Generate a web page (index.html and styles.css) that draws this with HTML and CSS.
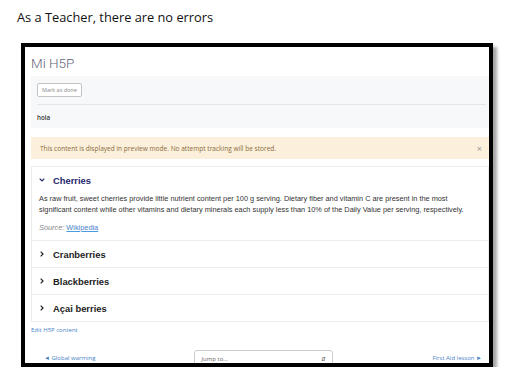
FILE: index.html
```html
<!DOCTYPE html>
<html lang="en">
<head>
    <meta charset="UTF-8">
    <meta name="viewport" content="width=device-width, initial-scale=1.0">
    <title>Mi H5P</title>
    <link rel="stylesheet" href="styles.css">
</head>
<body>

    <p class="caption">As a Teacher, there are no errors</p>

    <div class="frame">
        <div class="page">
            <h1 class="page-title">Mi H5P</h1>

            <div class="activity-header">
                <button class="btn-done">Mark as done</button>
                <div class="activity-desc">hola</div>
            </div>

            <div class="alert">
                <span>This content is displayed in preview mode. No attempt tracking will be stored.</span>
                <span class="alert-close">&times;</span>
            </div>

            <div class="h5p-box">
                <div class="acc-item open">
                    <div class="acc-head">
                        <svg class="chev" width="6" height="4" viewBox="0 0 6 4"><path d="M0.7 0.7 L3 3 L5.3 0.7" fill="none" stroke="currentColor" stroke-width="1.2"/></svg>
                        <span class="acc-title">Cherries</span>
                    </div>
                    <div class="acc-body">
                        <p>As raw fruit, sweet cherries provide little nutrient content per 100 g serving. Dietary fiber and vitamin C are present in the most significant content while other vitamins and dietary minerals each supply less than 10% of the Daily Value per serving, respectively.</p>
                        <p class="source"><em>Source:</em> <a href="#">Wikipedia</a></p>
                    </div>
                </div>
                <div class="acc-item">
                    <div class="acc-head">
                        <svg class="chev" width="6" height="6" viewBox="0 0 6 6"><path d="M1.7 0.7 L4 3 L1.7 5.3" fill="none" stroke="currentColor" stroke-width="1.2"/></svg>
                        <span class="acc-title">Cranberries</span>
                    </div>
                </div>
                <div class="acc-item">
                    <div class="acc-head">
                        <svg class="chev" width="6" height="6" viewBox="0 0 6 6"><path d="M1.7 0.7 L4 3 L1.7 5.3" fill="none" stroke="currentColor" stroke-width="1.2"/></svg>
                        <span class="acc-title">Blackberries</span>
                    </div>
                </div>
                <div class="acc-item">
                    <div class="acc-head">
                        <svg class="chev" width="6" height="6" viewBox="0 0 6 6"><path d="M1.7 0.7 L4 3 L1.7 5.3" fill="none" stroke="currentColor" stroke-width="1.2"/></svg>
                        <span class="acc-title">Açai berries</span>
                    </div>
                </div>
            </div>

            <a class="edit-link" href="#">Edit H5P content</a>

            <div class="activity-nav">
                <a href="#">&#9668; Global warming</a>
                <div class="jump">
                    <span>Jump to...</span>
                    <span class="jump-arrows">&#8693;</span>
                </div>
                <a href="#">First Aid lesson &#9658;</a>
            </div>
        </div>
    </div>

</body>
</html>
```

FILE: styles.css
```css
body {
    margin: 0;
    background-color: #fff;
    font-family: "Open Sans", "Liberation Sans", sans-serif;
}

.caption {
    margin: 0;
    padding: 9px 0 0 17px;
    font-size: 12.8px;
    line-height: 16px;
    color: #111;
}

.frame {
    margin: 18px 0 0 21px;
    width: 464px;
    height: 316px;
    border: 4px solid #000;
    box-shadow: 4px 4px 3px rgba(0, 0, 0, 0.35);
    overflow: hidden;
    background-color: #fff;
}

.page {
    padding-left: 6px;
}

.page-title {
    margin: 8px 0 5px;
    font-family: Roboto, "Open Sans", sans-serif;
    font-weight: 300;
    font-size: 13.5px;
    line-height: 16px;
    color: #67657a;
}

/* activity header */
.activity-header {
    background-color: #f7f8fa;
    padding: 7px 3px 5px 6px;
}

.btn-done {
    display: block;
    height: 14px;
    padding: 0 4px;
    margin-bottom: 7px;
    border: 1px solid #c4c4c4;
    border-radius: 2px;
    background-color: #fff;
    font-family: "Open Sans", sans-serif;
    font-size: 5.5px;
    color: #888;
}

.activity-desc {
    border-top: 1px solid #e4e5e8;
    padding-top: 8px;
    font-size: 6.3px;
    line-height: 10px;
    font-weight: 600;
    color: #333;
}

/* preview alert */
.alert {
    margin-top: 9px;
    height: 22px;
    padding: 0 7px 0 9px;
    background-color: #fcefdc;
    display: flex;
    justify-content: space-between;
    align-items: center;
    font-size: 6.55px;
    color: #8a6d3b;
}

.alert-close {
    font-size: 9px;
    color: #999;
}

/* H5P accordion */
.h5p-box {
    margin-top: 7px;
    border: 1px solid #ececec;
    font-family: "Liberation Sans", Arial, sans-serif;
}

.acc-item + .acc-item {
    border-top: 1px solid #ececec;
}

.acc-head {
    height: 26px;
    display: flex;
    align-items: center;
    padding-left: 7px;
    color: #222;
}

.acc-item.open .acc-head {
    color: #25256b;
}

.chev {
    width: 6px;
    margin-right: 8px;
}

.acc-title {
    font-size: 9.4px;
    font-weight: bold;
}

.acc-body {
    padding: 0 12px 7px 7px;
    font-size: 7.35px;
    line-height: 11px;
    color: #333;
}

.acc-body p {
    margin: 0;
}

.acc-body .source {
    margin-top: 7px;
    color: #888;
}

.acc-body .source a {
    color: #4a82c8;
    text-decoration: underline;
    text-decoration-color: #4a9ae0;
}

.edit-link {
    display: block;
    margin-top: 3px;
    font-size: 6px;
    line-height: 10px;
    color: #4a82c8;
    text-decoration: none;
}

/* bottom navigation */
.activity-nav {
    margin-top: 15px;
    padding: 0 7px 0 13px;
    display: flex;
    justify-content: space-between;
    align-items: flex-start;
    font-size: 6px;
}

.activity-nav a {
    margin-top: 3px;
    line-height: 10px;
    color: #4a82c8;
    text-decoration: none;
}

.jump {
    width: 125px;
    height: 20px;
    padding: 3px 6px 0 6px;
    border: 1px solid #ccc;
    border-radius: 3px;
    display: flex;
    justify-content: space-between;
    line-height: 10px;
    color: #666;
}

.jump-arrows {
    font-size: 6px;
    color: #555;
}
```
